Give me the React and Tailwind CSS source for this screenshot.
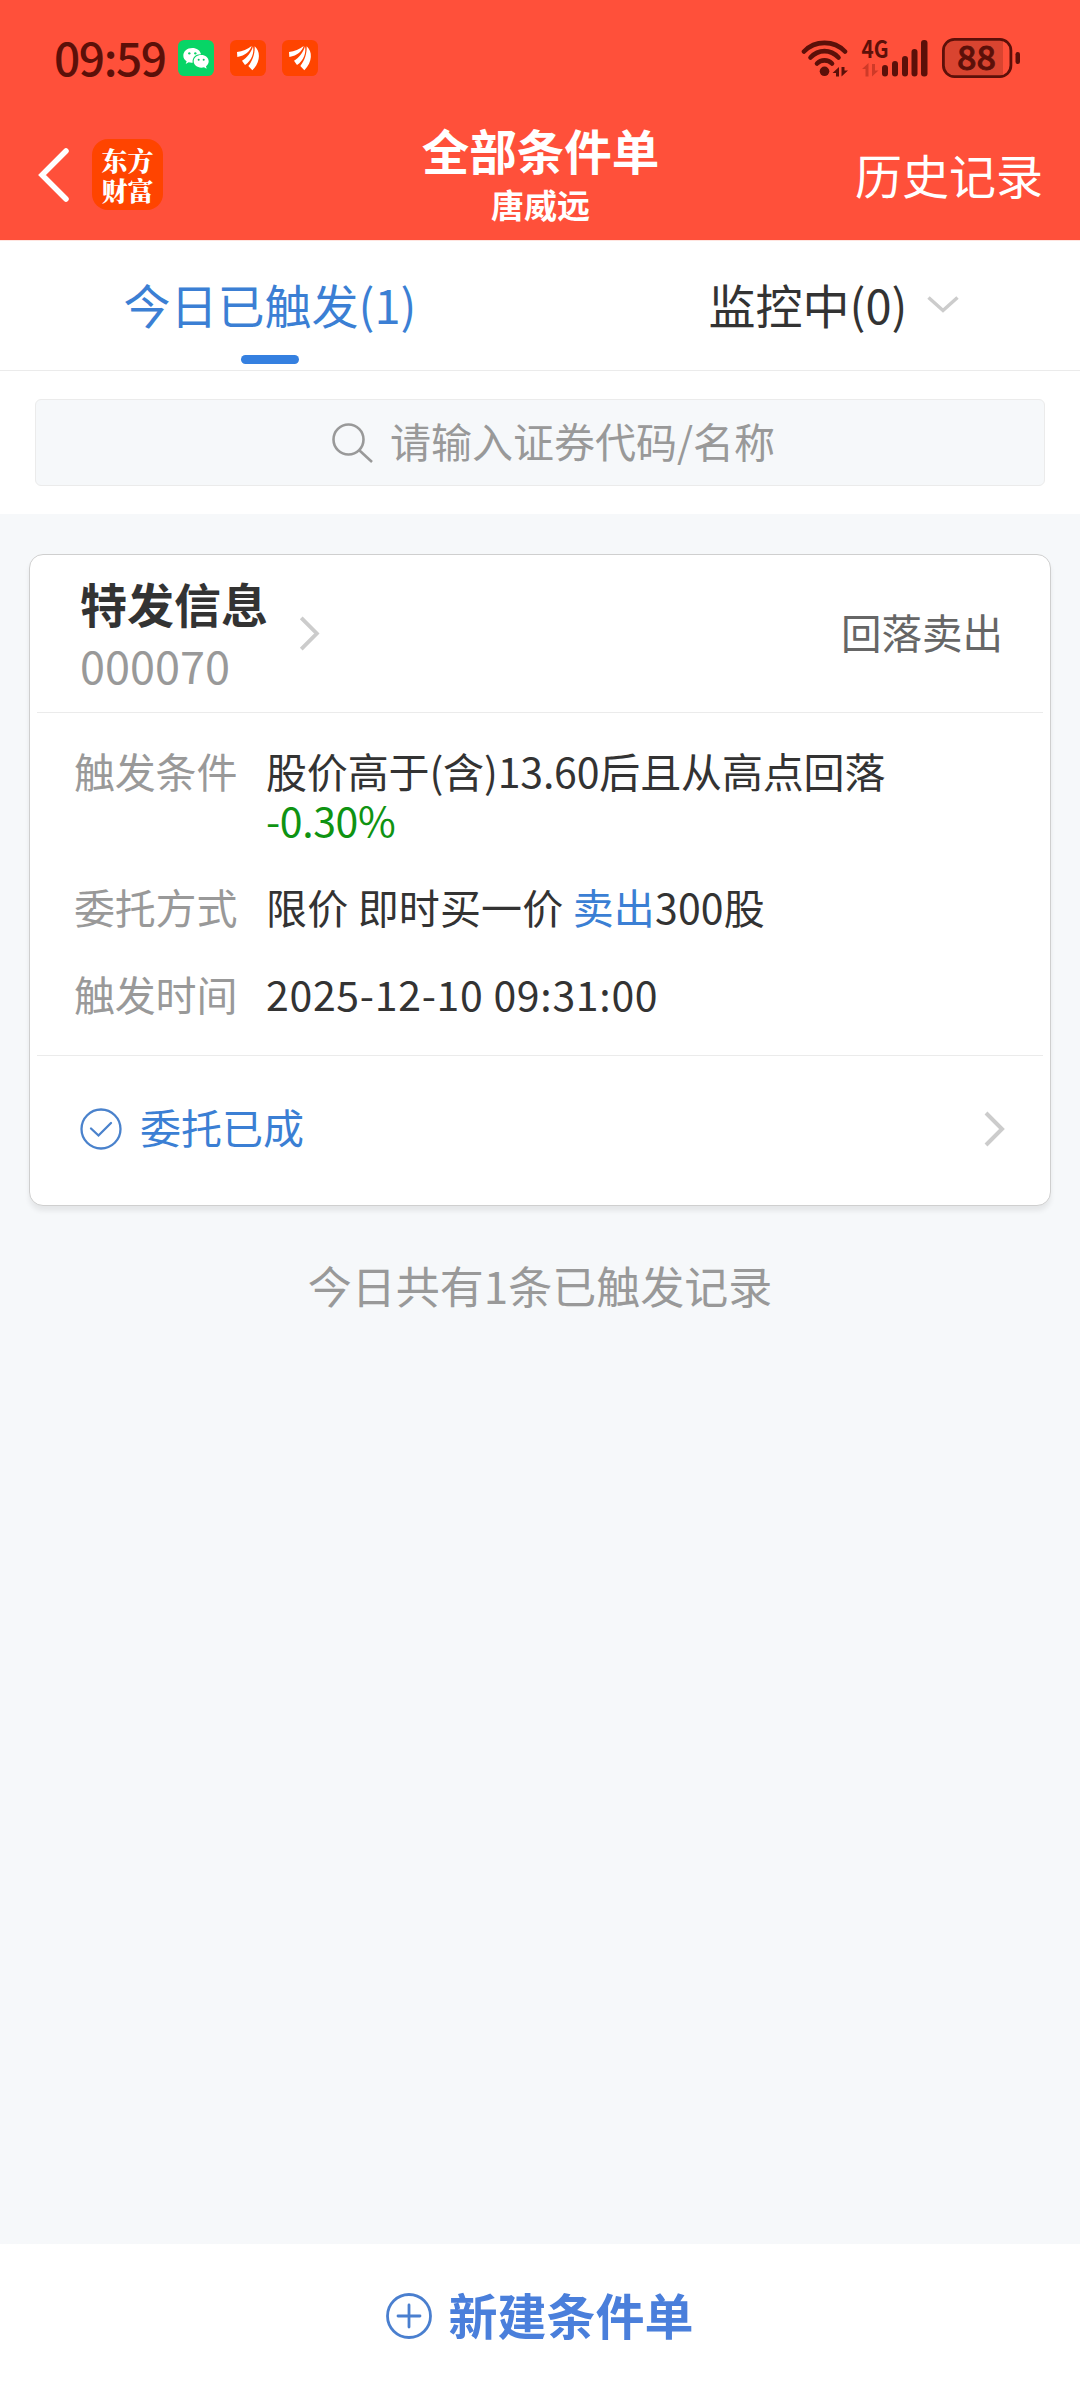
import React, { useState } from "react";

const tabs = [
  { key: "triggered", label: "今日已触发(1)" },
  { key: "watching", label: "监控中(0)" },
];

const WechatIcon = () => (
  <svg className="w-9 h-9" viewBox="0 0 108 108">
    <rect width="108" height="108" rx="19" fill="#07d566" />
    <path
      d="M43 24C27 24 16 34 16 47c0 7 4 13 10 17l-3 8 9-5c4 1 8 2 12 1-2-16 10-26 25-25C67 31 56 24 43 24z"
      fill="#fff"
    />
    <path
      d="M70 45c-13 0-23 8-23 19s10 19 23 19c3 0 6 0 8-1l8 4-2-7c5-4 8-9 8-15 0-11-10-19-22-19z"
      fill="#fff"
    />
    <circle cx="34" cy="40" r="3.5" fill="#07d566" />
    <circle cx="52" cy="40" r="3.5" fill="#07d566" />
    <circle cx="62" cy="59" r="3" fill="#07c160" />
    <circle cx="77" cy="59" r="3" fill="#07c160" />
  </svg>
);

const EastmoneyIcon = () => (
  <svg className="w-9 h-9" viewBox="0 0 108 108">
    <rect width="108" height="108" rx="19" fill="#ff4400" />
    <g fill="#fff">
      <path d="M21 36C38 34 52 28 65 18C60 34 46 47 22 51Z" />
      <path d="M36 62C52 54 64 36 69 19C73 38 66 62 45 75Z" />
      <path d="M55 78C68 62 75 40 74 19C92 34 92 66 67 91Z" />
    </g>
  </svg>
);

const WifiIcon = () => (
  <svg className="w-12 h-[38px]" viewBox="0 0 48 38">
    <g fill="none" stroke="#5c1009" strokeWidth="4.6" strokeLinecap="round">
      <path d="M3 12.5C14 1 33 1 44 12.5" />
      <path d="M9.5 18.5C17.5 10 29.5 10 37.5 18.5" />
      <path d="M16 24.5C20 20.3 27 20.3 31 24.5" />
    </g>
    <g fill="#5c1009">
      <circle cx="23.5" cy="32.3" r="4.8" />
      <path d="M31.5 34l6.5-6v9.5h-3V34z" />
      <path d="M47 31.5l-6.5 6V28h3v3.5z" />
    </g>
  </svg>
);

const SignalIcon = () => (
  <svg className="w-[67px] h-[38px] overflow-visible" viewBox="0 0 67 38">
    <text
      x="0.5"
      y="19"
      fontSize="24"
      fontWeight="700"
      fill="#5c1009"
      textLength="27"
      lengthAdjust="spacingAndGlyphs"
    >
      4G
    </text>
    <g fill="#cf3a28">
      <path d="M1 30l6.5-6v13.5h-3V30z" />
      <path d="M17.5 31.5l-6.5 6V25h3v6.5z" />
    </g>
    <g fill="#5c1009">
      <rect x="21" y="26" width="6" height="11.5" rx="3" />
      <rect x="31" y="22" width="6" height="15.5" rx="3" />
      <rect x="41" y="17" width="6" height="20.5" rx="3" />
      <rect x="50.5" y="10" width="6" height="27.5" rx="3" />
      <rect x="60" y="1" width="6.5" height="36.5" rx="3" />
    </g>
  </svg>
);

const BatteryIcon = () => (
  <svg className="w-[79px] h-10 overflow-visible" viewBox="0 0 79 40">
    <path d="M12 2H61V38H12Q2 38 2 28V12Q2 2 12 2z" fill="#d94430" />
    <rect
      x="1.4"
      y="1.4"
      width="67.5"
      height="37.2"
      rx="11"
      fill="none"
      stroke="#5c1009"
      strokeWidth="2.8"
    />
    <rect x="73.5" y="14" width="4.5" height="12" rx="2.2" fill="#5c1009" />
    <text
      x="15"
      y="32"
      fontSize="33"
      fontWeight="500"
      fill="#5c1009"
      stroke="#5c1009"
      strokeWidth="0.8"
      textLength="39"
      lengthAdjust="spacingAndGlyphs"
    >
      88
    </text>
  </svg>
);

const ArrowRight = ({ className }) => (
  <svg className={className} viewBox="0 0 21 36">
    <path d="M2 2l16 16L2 34" fill="none" stroke="#ccc" strokeWidth="4" />
  </svg>
);

const StatusBar = () => (
  <div className="flex items-center justify-between h-[76px] pt-10 pl-[54px] pr-[59px]">
    <div className="flex items-center">
      <span className="w-[124px] pb-1 text-[46px] leading-8 font-medium tracking-[-1.4px] text-[#5c1009]">
        09:59
      </span>
      <div className="flex gap-4">
        <WechatIcon />
        <EastmoneyIcon />
        <EastmoneyIcon />
      </div>
    </div>
    <div className="flex items-center">
      <WifiIcon />
      <div className="ml-3">
        <SignalIcon />
      </div>
      <div className="ml-3.5">
        <BatteryIcon />
      </div>
    </div>
  </div>
);

const Header = () => (
  <header className="h-[241px] bg-[#ff503a] border-b border-[#ffe5e0]">
    <StatusBar />
    <div className="grid grid-cols-3 items-center h-[164px] pt-[33px] pl-[38px] pr-[37px]">
      <div className="flex items-center">
        <svg className="w-[31px] h-[54px]" viewBox="0 0 31 54">
          <path
            d="M28 3L4 27l24 24"
            fill="none"
            stroke="#fff"
            strokeWidth="5.5"
            strokeLinecap="round"
          />
        </svg>
        <div className="ml-[23px] w-[71px] h-[71px] rounded-2xl bg-[#ff4400] flex flex-col items-center justify-center text-[26px] leading-[30px] font-black text-white font-['Noto_Serif_CJK_SC','Noto_Sans_CJK_SC',serif]">
          <span>东方</span>
          <span>财富</span>
        </div>
      </div>
      <div className="text-center text-white font-bold whitespace-nowrap">
        <h1 className="text-[47.5px] leading-[58px]">全部条件单</h1>
        <p className="text-[33px] leading-[50px]">唐威远</p>
      </div>
      <button className="text-right text-white text-[47px]">历史记录</button>
    </div>
  </header>
);

const DetailRow = ({ label, children }) => (
  <div className="flex text-[41px] leading-[49px]">
    <span className="w-[192px] shrink-0 text-[#999] tracking-[-0.2px]">
      {label}
    </span>
    <div className="text-[#333]">{children}</div>
  </div>
);

const OrderCard = () => (
  <div className="mx-[29px] mt-10 h-[652px] bg-white border border-[#cfcfcf] rounded-[14px] shadow-[0_5px_5px_rgba(0,0,0,0.07)] px-[7px]">
    {/* 股票名称 */}
    <div className="flex items-center justify-between h-[158px] pl-[43px] pr-10 border-b border-[#ebebeb]">
      <div className="flex items-center">
        <div>
          <div className="text-[47px] leading-[62px] font-bold text-[#333]">
            特发信息
          </div>
          <div className="text-[45px] leading-[62px] text-[#999]">000070</div>
        </div>
        <ArrowRight className="w-[21px] h-[35px] ml-[31px]" />
      </div>
      <span className="pb-0.5 text-[40.5px] text-[#666]">回落卖出</span>
    </div>

    {/* 条件详情 */}
    <div className="flex flex-col gap-[38px] h-[343px] pt-[33px] pl-[37px] border-b border-[#ebebeb]">
      <DetailRow label="触发条件">
        <span className="tracking-[-0.15px]">
          股价高于(含)13.60后且从高点回落
        </span>
        <div className="text-[#0f9312] tracking-[-0.4px]">-0.30%</div>
      </DetailRow>
      <DetailRow label="委托方式">
        <span className="tracking-[0.15px]">
          限价 即时买一价 <span className="text-[#3b7fd4]">卖出</span>300股
        </span>
      </DetailRow>
      <DetailRow label="触发时间">
        <span className="tracking-[0.7px]">2025-12-10 09:31:00</span>
      </DetailRow>
    </div>

    {/* 委托状态 */}
    <div className="flex items-center justify-between h-[145px] pl-[43px] pr-[38px]">
      <div className="flex items-center">
        <svg className="w-[42px] h-[42px]" viewBox="0 0 42 42">
          <g fill="none" stroke="#4a82cc" strokeWidth="2.3">
            <circle cx="21" cy="21" r="19.5" />
            <path d="M11 20.5l7.5 7L31 15" strokeLinecap="round" />
          </g>
        </svg>
        <span className="ml-[18px] pb-[3px] text-[41px] text-[#3b7fd4]">
          委托已成
        </span>
      </div>
      <ArrowRight className="w-[21px] h-9" />
    </div>
  </div>
);

const App = () => {
  const [activeTab, setActiveTab] = useState("triggered");

  return (
    <div className="w-[1080px] h-[2388px] flex flex-col bg-[#f6f8fa] font-['Noto_Sans_CJK_SC',sans-serif]">
      <Header />

      {/* 标签栏 */}
      <nav className="grid grid-cols-2 h-[130px] bg-white border-b border-[#ebebeb]">
        {tabs.map((tab) => (
          <button
            key={tab.key}
            onClick={() => setActiveTab(tab.key)}
            className={`flex flex-col items-center text-[47px] ${
              activeTab === tab.key ? "text-[#3b7fd4]" : "text-[#333]"
            }`}
          >
            <span className="flex items-center h-[114px] pt-[13px]">
              {tab.key === "watching" && <span className="w-12" />}
              {tab.label}
              {tab.key === "watching" && (
                <svg className="w-8 h-[17px] ml-5" viewBox="0 0 32 17">
                  <path
                    d="M1.5 1.5L16 14.5l14.5-13"
                    fill="none"
                    stroke="#ccc"
                    strokeWidth="3.5"
                  />
                </svg>
              )}
            </span>
            {activeTab === tab.key && (
              <span className="w-[58px] h-[9px] rounded-full bg-[#3580e0]" />
            )}
          </button>
        ))}
      </nav>

      {/* 搜索框 */}
      <div className="h-[143px] bg-white px-[35px] pt-7">
        <div className="flex items-center justify-center h-[87px] pl-[27px] rounded-md bg-[#f6f8fa] border border-[#ebebeb] text-[41px] text-[#999]">
          <svg className="w-[41px] h-10 mr-[17px]" viewBox="0 0 41 40">
            <g fill="none" stroke="#999" strokeWidth="2.6">
              <circle cx="16.5" cy="16.5" r="15" />
              <path d="M27 27l13 12" />
            </g>
          </svg>
          <span className="pb-[3px]">请输入证券代码/名称</span>
        </div>
      </div>

      <main className="flex-1">
        <OrderCard />
        <p className="mt-[49px] text-center text-[44px] leading-[60px] text-[#999]">
          今日共有1条已触发记录
        </p>
      </main>

      <button className="flex items-center justify-center h-36 bg-white text-[49px] font-bold text-[#4a7fdb]">
        <svg className="w-[46px] h-[46px] mr-4" viewBox="0 0 46 46">
          <g fill="none" stroke="#4a7fcf" strokeWidth="2.8">
            <circle cx="23" cy="23" r="21.5" />
            <path d="M23 12v22M12 23h22" strokeLinecap="round" />
          </g>
        </svg>
        <span className="pb-1">新建条件单</span>
      </button>
    </div>
  );
};

export default App;
